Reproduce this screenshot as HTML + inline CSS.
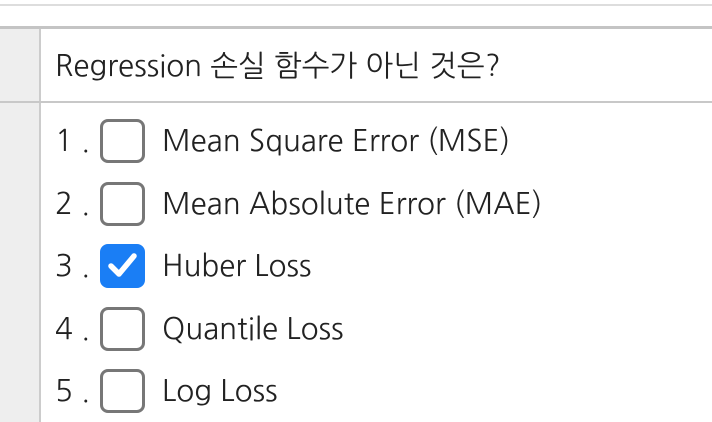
<!DOCTYPE html>
<html><head><meta charset="utf-8"><style>
html,body{margin:0;padding:0;width:712px;height:422px;overflow:hidden;background:#fff;font-family:"NanumGothic","Liberation Sans","Noto Sans CJK KR",sans-serif;color:#222}
.l1{position:absolute;left:0;top:4px;width:712px;height:2px;background:#ddd}
.l2{position:absolute;left:0;top:26px;width:712px;height:3px;background:#c4c4c4}
.side{position:absolute;left:0;top:29px;width:39px;height:393px;background:#eee}
.vl{position:absolute;left:39px;top:29px;width:2px;height:393px;background:#ccc}
.l3{position:absolute;left:0;top:101px;width:712px;height:2px;background:#c8c8c8}
.q{position:absolute;left:55px;top:49px;font-size:29.5px;line-height:36px;white-space:nowrap}
.it{position:absolute;left:55px;height:44px;font-size:29.5px;line-height:46px;white-space:nowrap}
.n{position:absolute;left:0;top:0}
.cb{position:absolute;left:45px;top:0;width:39px;height:38px;border:3px solid #777;border-radius:8px}
.cb.on{background:#1a7ef5;border-color:#1a7ef5}
.t{position:absolute;left:107px;top:0}
</style></head><body>
<div class="l1"></div><div class="l2"></div><div class="side"></div><div class="vl"></div><div class="l3"></div>
<div class="q">Regression 손실 함수가 아닌 것은?</div>
<div class="it" style="top:119px"><span class="n">1 .</span><div class="cb"></div><span class="t">Mean Square Error (MSE)</span></div>
<div class="it" style="top:182px"><span class="n">2 .</span><div class="cb"></div><span class="t">Mean Absolute Error (MAE)</span></div>
<div class="it" style="top:244px"><span class="n">3 .</span><div class="cb on"><svg width="39" height="38" viewBox="0 0 39 38"><path d="M8 19 L16 27 L31 9" fill="none" stroke="#fff" stroke-width="5.5" stroke-linecap="round" stroke-linejoin="round"/></svg></div><span class="t">Huber Loss</span></div>
<div class="it" style="top:307px"><span class="n">4 .</span><div class="cb"></div><span class="t">Quantile Loss</span></div>
<div class="it" style="top:369px"><span class="n">5 .</span><div class="cb"></div><span class="t">Log Loss</span></div>
</body></html>
